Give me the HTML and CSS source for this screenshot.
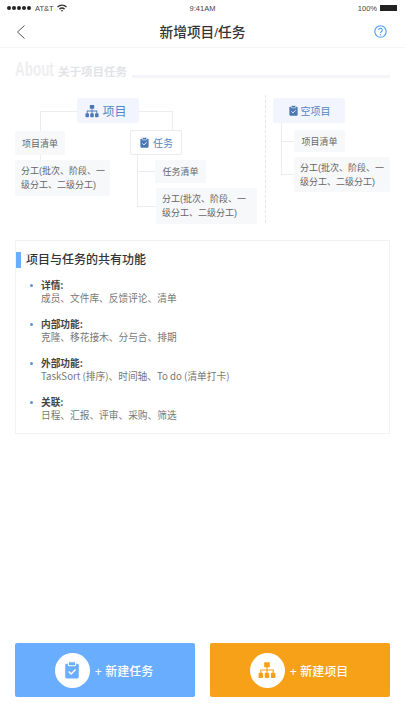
FILE: index.html
```html
<!DOCTYPE html>
<html lang="zh-CN">
<head>
<meta charset="UTF-8">
<meta name="viewport" content="width=device-width, initial-scale=1.0">
<title>新增项目/任务</title>
<link rel="stylesheet" href="styles.css">
</head>
<body>

<svg class="defs" width="0" height="0">
    <symbol id="iconTree" viewBox="0 0 16 16">
        <rect x="5.500" y="1" width="5" height="4.500" rx=".5"/>
        <path d="M7.500 5h1v2.500H14V11h-1V8.500H8.500V11h-1V8.500H3V11H2V7.500h5.500z"/>
        <rect x=".5" y="10.500" width="4" height="4.500" rx=".8"/>
        <rect x="6" y="10.500" width="4" height="4.500" rx=".8"/>
        <rect x="11.500" y="10.500" width="4" height="4.500" rx=".8"/>
    </symbol>
    <symbol id="iconClip" viewBox="0 0 16 16">
        <rect x="2" y="2.500" width="12" height="13" rx="1.200"/>
        <rect x="4.800" y=".6" width="6.400" height="3.600" rx=".6" stroke="#fff" stroke-width=".9"/>
        <path d="M5 9.300l2.200 2.200L11.200 7.600" fill="none" stroke="#fff" stroke-width="1.300"/>
    </symbol>
</svg>

<div class="status">
    <div class="status-left">
        <span class="dots"><i></i><i></i><i></i><i></i><i></i></span>
        <span>AT&amp;T</span>
        <svg class="wifi" width="10" height="8" viewBox="0 0 10 8"><path d="M0 2.500a7 7 0 0 1 10 0L9 3.600a5.500 5.500 0 0 0-8 0zM2 4.600a4.200 4.200 0 0 1 6 0L7 5.700a2.800 2.800 0 0 0-4 0zM3.800 6.500a1.700 1.700 0 0 1 2.400 0L5 7.800z"/></svg>
    </div>
    <div class="status-time">9:41AM</div>
    <div class="status-right">
        <span>100%</span>
        <span class="battery"></span>
    </div>
</div>

<div class="nav">
    <svg class="back" width="9" height="14" viewBox="0 0 9 14"><path d="M8.500 .5L1.500 7l7 6.500" fill="none" stroke="#555" stroke-width="1"/></svg>
    <h1>新增项目/任务</h1>
    <svg class="help" width="13" height="13" viewBox="0 0 13 13">
        <circle cx="6.500" cy="6.500" r="5.700" fill="none" stroke="#4a9df0" stroke-width="1.100"/>
        <path d="M4.700 5.100a1.800 1.800 0 1 1 2.700 1.500c-.6.400-.9.700-.9 1.400" fill="none" stroke="#4a9df0" stroke-width="1.100"/>
        <circle cx="6.500" cy="9.700" r=".7" fill="#4a9df0"/>
    </svg>
</div>

<div class="about">
    <span class="about-en">About</span>
    <span class="about-cn">关于项目任务</span>
    <span class="about-line"></span>
</div>

<div class="diagram">
    <div class="line l1"></div>
    <div class="line l2"></div>
    <div class="line l3"></div>
    <div class="line l4"></div>
    <div class="line l5"></div>
    <div class="line l6"></div>
    <div class="line l7"></div>
    <div class="line l8"></div>
    <div class="line l9"></div>
    <div class="line l10"></div>
    <div class="line l11"></div>
    <div class="divider"></div>

    <div class="node head n-project"><svg class="ico"><use href="#iconTree"/></svg>项目</div>
    <div class="node leaf n-list1">项目清单</div>
    <div class="node leaf split n-split1"><span>分工(批次、阶段、一<br>级分工、二级分工)</span></div>
    <div class="node head-white n-task"><svg class="ico-sm"><use href="#iconClip"/></svg>任务</div>
    <div class="node leaf n-list2">任务清单</div>
    <div class="node leaf split n-split2"><span>分工(批次、阶段、一<br>级分工、二级分工)</span></div>
    <div class="node head-small n-empty"><svg class="ico-sm"><use href="#iconClip"/></svg>空项目</div>
    <div class="node leaf n-list3">项目清单</div>
    <div class="node leaf split n-split3"><span>分工(批次、阶段、一<br>级分工、二级分工)</span></div>
</div>

<div class="card">
    <h2>项目与任务的共有功能</h2>
    <ul>
        <li><b>详情:</b>成员、文件库、反馈评论、清单</li>
        <li><b>内部功能:</b>克隆、移花接木、分与合、排期</li>
        <li><b>外部功能:</b>TaskSort (排序)、时间轴、To do (清单打卡)</li>
        <li><b>关联:</b>日程、汇报、评审、采购、筛选</li>
    </ul>
</div>

<div class="actions">
    <div class="btn btn-task">
        <span class="btn-circle"><svg><use href="#iconClip"/></svg></span>
        <span>+ 新建任务</span>
    </div>
    <div class="btn btn-project">
        <span class="btn-circle"><svg><use href="#iconTree"/></svg></span>
        <span>+ 新建项目</span>
    </div>
</div>

</body>
</html>
```

FILE: styles.css
```css
* { box-sizing:border-box; }
html, body { height:100%; }
body { margin:0; width:405px; height:720px; display:flex; flex-direction:column; overflow:hidden; background:white; color:#333; font-family:'Liberation Sans','Noto Sans CJK SC',sans-serif; }
.defs { position:absolute; }

.status { height:16px; padding:0 7px; display:flex; align-items:center; justify-content:space-between; font-size:7.5px; color:#444; position:relative; }
.status-left { display:flex; align-items:center; gap:3px; }
.dots { display:flex; gap:1px; margin-right:1px; }
.dots i { width:4px; height:4px; border-radius:50%; background:#222; }
.wifi { fill:#333; }
.status-time { position:absolute; left:0; right:0; text-align:center; }
.status-right { display:flex; align-items:center; gap:3px; }
.battery { width:17px; height:6px; background:#222; margin-right:1px; }

.nav { height:32px; padding:0 18px; display:grid; grid-template-columns:1fr auto 1fr; align-items:center; border-bottom:1px solid #f5f5f5; }
.nav h1 { margin:0 0 2px; font-size:13.700px; font-weight:500; color:#333; }
.back { margin-left:-2px; }
.help { justify-self:end; }

.about { height:42px; padding:0 15px 10px; display:flex; align-items:flex-end; }
.about-en { display:inline-block; width:39px; white-space:nowrap; transform:scaleX(.64); transform-origin:left bottom; font-size:21px; line-height:22px; font-weight:bold; color:#eeeef1; }
.about-cn { margin-left:4px; font-size:11.500px; line-height:16px; font-weight:bold; color:#e2e3e7; }
.about-line { flex:1; height:3px; margin:0 0 2px 5px; background:#f4f5f9; }

/* tree is placed by coordinates, top of box is y=90 */
.diagram { position:relative; height:140px; }
.node { position:absolute; display:flex; align-items:center; justify-content:center; font-size:9px; color:#666; }
.leaf { background:#f7f8fa; border-radius:2px; }
.split { justify-content:flex-start; padding:0 6px; line-height:14px; white-space:nowrap; }
.head { background:#f2f5fd; color:#5585c5; font-size:12px; border-radius:2px; gap:3px; padding-right:4px; }
.head-white { background:white; border:1px solid #ebebeb; border-radius:2px; color:#5585c5; font-size:10px; gap:3px; }
.head-small { background:#f2f5fd; color:#5585c5; font-size:10px; border-radius:2px; gap:2px; }
.ico { width:14px; height:14px; fill:#4a78b4; }
.ico-sm { width:11px; height:11px; fill:#4a78b4; }

.n-project { left:77px; top:8px; width:62px; height:25px; }
.n-list1 { left:15px; top:41px; width:50px; height:24px; }
.n-split1 { left:15px; top:70px; width:95px; height:36px; }
.n-task { left:130px; top:40px; width:52px; height:25px; }
.n-list2 { left:155px; top:70px; width:51px; height:23px; }
.n-split2 { left:156px; top:98px; width:101px; height:36px; }
.n-empty { left:273px; top:8px; width:72px; height:25px; }
.n-list3 { left:294px; top:40px; width:51px; height:22px; }
.n-split3 { left:294px; top:67px; width:96px; height:35px; }

.line { position:absolute; background:#ececec; }
.l1 { left:40px; top:21px; width:37px; height:1px; }
.l2 { left:40px; top:21px; width:1px; height:20px; }
.l3 { left:139px; top:21px; width:33px; height:1px; }
.l4 { left:172px; top:21px; width:1px; height:19px; }
.l5 { left:40px; top:65px; width:1px; height:5px; }
.l6 { left:137px; top:65px; width:1px; height:51px; }
.l7 { left:137px; top:81px; width:18px; height:1px; }
.l8 { left:137px; top:116px; width:19px; height:1px; }
.l9 { left:281px; top:33px; width:1px; height:51px; }
.l10 { left:281px; top:51px; width:13px; height:1px; }
.l11 { left:281px; top:84px; width:13px; height:1px; }
.divider { position:absolute; left:265px; top:5px; height:128px; border-left:1px dashed #e6e6e6; }

.card { margin:10px 15px 0; height:194px; border:1px solid #f2f2f2; padding:11px 10px 0 0; }
.card h2 { margin:0; height:16px; line-height:16px; padding-left:5px; border-left:5px solid #69adff; font-size:12px; font-weight:500; color:#333; }
.card ul { list-style:none; margin:11px 0 0; padding:0 0 0 25px; }
.card li { position:relative; height:39px; font-family:'Noto Sans CJK SC',sans-serif; font-size:9.700px; line-height:13px; color:#777; }
.card li b { display:block; color:#444; }
.card li::before { content:''; position:absolute; left:-11px; top:5px; width:3px; height:3px; border-radius:50%; background:#5a93dd; }

.actions { margin-top:auto; margin-bottom:23px; padding:0 15px; display:flex; justify-content:space-between; }
.btn { width:180px; height:54px; padding-right:2px; border-radius:2px; display:flex; align-items:center; justify-content:center; gap:5px; color:white; font-size:12px; font-weight:500; }
.btn-task { background:#69adff; }
.btn-project { background:#f6a117; }
.btn-circle { width:35px; height:35px; border-radius:50%; background:white; display:flex; align-items:center; justify-content:center; }
.btn-circle svg { width:18px; height:18px; }
.btn-task svg { fill:#69adff; }
.btn-project svg { fill:#f6a117; }
```
